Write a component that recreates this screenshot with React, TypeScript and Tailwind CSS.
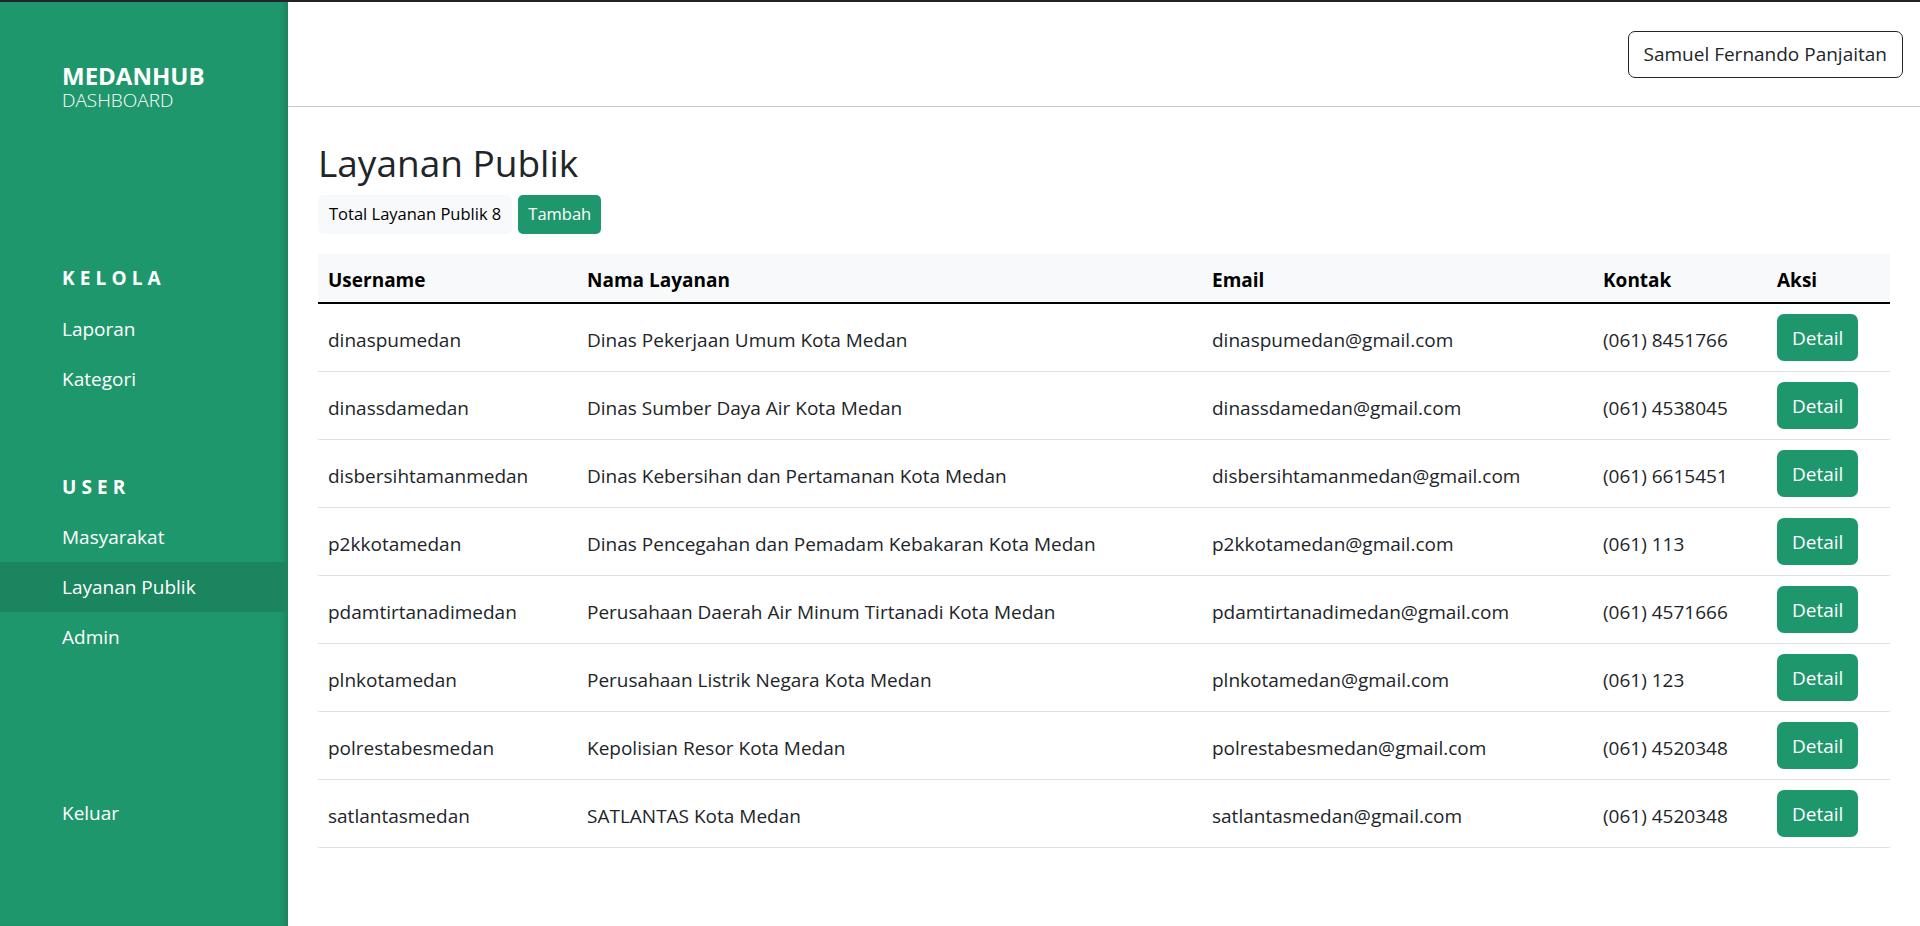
import React from "react";

const rows = [
  { user: "dinaspumedan", name: "Dinas Pekerjaan Umum Kota Medan", email: "dinaspumedan@gmail.com", phone: "(061) 8451766" },
  { user: "dinassdamedan", name: "Dinas Sumber Daya Air Kota Medan", email: "dinassdamedan@gmail.com", phone: "(061) 4538045" },
  { user: "disbersihtamanmedan", name: "Dinas Kebersihan dan Pertamanan Kota Medan", email: "disbersihtamanmedan@gmail.com", phone: "(061) 6615451" },
  { user: "p2kkotamedan", name: "Dinas Pencegahan dan Pemadam Kebakaran Kota Medan", email: "p2kkotamedan@gmail.com", phone: "(061) 113" },
  { user: "pdamtirtanadimedan", name: "Perusahaan Daerah Air Minum Tirtanadi Kota Medan", email: "pdamtirtanadimedan@gmail.com", phone: "(061) 4571666" },
  { user: "plnkotamedan", name: "Perusahaan Listrik Negara Kota Medan", email: "plnkotamedan@gmail.com", phone: "(061) 123" },
  { user: "polrestabesmedan", name: "Kepolisian Resor Kota Medan", email: "polrestabesmedan@gmail.com", phone: "(061) 4520348" },
  { user: "satlantasmedan", name: "SATLANTAS Kota Medan", email: "satlantasmedan@gmail.com", phone: "(061) 4520348" },
];

function NavItem({ label, active }: { label: string; active?: boolean }) {
  return (
    <a
      href="#"
      className={`block h-[50px] px-[62px] text-[19px] leading-[50px] text-white ${active ? "bg-[#1a855e]" : ""}`}
    >
      {label}
    </a>
  );
}

function SectionLabel({ label, className }: { label: string; className: string }) {
  return (
    <div className={`px-[62px] text-[19px] font-bold leading-[30px] tracking-[0.27em] text-white ${className}`}>
      {label}
    </div>
  );
}

export default function App() {
  return (
    <div
      className="flex h-screen border-t-2 border-[#212529] bg-white text-[#212529]"
      style={{ fontFamily: '"Open Sans", "Noto Sans", sans-serif' }}
    >
      {/* Sidebar */}
      <aside className="flex w-[288px] shrink-0 flex-col bg-[#1f976d] pt-[61px] pb-[88px] shadow-[inset_-8px_0_8px_-6px_rgba(0,0,0,0.18)]">
        <div className="px-[62px] text-white">
          <div className="text-[24px] font-bold leading-[26px]">MEDANHUB</div>
          <div className="text-[19px] font-light leading-[23px]">DASHBOARD</div>
        </div>

        <SectionLabel label="KELOLA" className="mt-[151px] mb-[11px]" />
        <NavItem label="Laporan" />
        <NavItem label="Kategori" />

        <SectionLabel label="USER" className="mt-[68px] mb-[10px]" />
        <NavItem label="Masyarakat" />
        <NavItem label="Layanan Publik" active />
        <NavItem label="Admin" />

        <div className="mt-auto">
          <NavItem label="Keluar" />
        </div>
      </aside>

      {/* Main */}
      <main className="flex min-w-0 flex-1 flex-col">
        <header className="flex h-[105px] shrink-0 items-center justify-end border-b border-[#cccccc] pr-[17px]">
          <button className="h-[47px] rounded-[7px] border border-[#212529] px-[15px] text-[19px] leading-[30px] text-[#212529]">
            Samuel Fernando Panjaitan
          </button>
        </header>

        <section className="px-[30px] pt-[32px]">
          <h1 className="text-[37px] font-normal leading-[48px]">Layanan Publik</h1>
          <div className="mt-[8px] flex gap-[6px]">
            <span className="flex h-[39px] items-center rounded-[5px] border border-[#f8f9fa] bg-[#f8f9fa] px-[10px] text-[16.5px] text-black">
              Total Layanan Publik 8
            </span>
            <button className="h-[39px] rounded-[5px] bg-[#1f976d] px-[10px] text-[16.5px] text-white">
              Tambah
            </button>
          </div>

          <table className="mt-[20px] w-full table-fixed border-collapse text-left text-[19px]">
            <colgroup>
              <col className="w-[259px]" />
              <col className="w-[625px]" />
              <col className="w-[391px]" />
              <col className="w-[174px]" />
              <col />
            </colgroup>
            <thead className="bg-[#f8f9fa]">
              <tr className="border-b-2 border-black">
                {["Username", "Nama Layanan", "Email", "Kontak", "Aksi"].map((h) => (
                  <th key={h} className="px-[10px] pt-[11px] pb-[7px] font-bold leading-[30px] text-black">
                    {h}
                  </th>
                ))}
              </tr>
            </thead>
            <tbody>
              {rows.map((r) => (
                <tr key={r.user} className="border-b border-[#dee2e6]">
                  <td className="px-[10px] pt-[12px] pb-[8px] leading-[30px]">{r.user}</td>
                  <td className="px-[10px] pt-[12px] pb-[8px] leading-[30px]">{r.name}</td>
                  <td className="px-[10px] pt-[12px] pb-[8px] leading-[30px]">{r.email}</td>
                  <td className="px-[10px] pt-[12px] pb-[8px] leading-[30px]">{r.phone}</td>
                  <td className="px-[10px] py-[10px] leading-[30px]">
                    <button className="h-[47px] rounded-[7px] bg-[#1f976d] px-[15px] text-[19px] text-white">
                      Detail
                    </button>
                  </td>
                </tr>
              ))}
            </tbody>
          </table>
        </section>
      </main>
    </div>
  );
}
